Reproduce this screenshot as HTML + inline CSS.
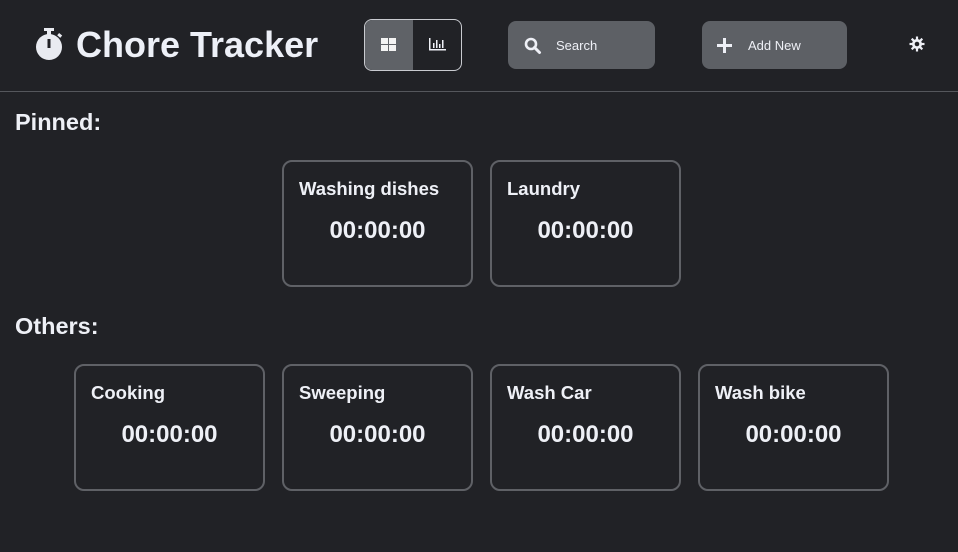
<!DOCTYPE html>
<html><head><style>
*{margin:0;padding:0;box-sizing:border-box}
body{width:958px;height:552px;background:#212226;font-family:"Liberation Sans",sans-serif;color:#eef0f6;position:relative;overflow:hidden}
.hdr{position:absolute;left:0;top:0;width:958px;height:92px;border-bottom:1px solid #55575c}
.title{position:absolute;left:76px;top:24px;font-size:36px;font-weight:bold;color:#edf0f7}
.tog{position:absolute;left:364px;top:19px;width:98px;height:52px;border:1px solid #c9cbd0;border-radius:8px;overflow:hidden}
.tog .a{position:absolute;left:0;top:0;width:48px;height:50px;background:#5f6267;border-radius:7px 0 0 7px}
.btn{position:absolute;top:21px;height:48px;background:#5d6065;border-radius:8px;font-size:13px;color:#eef0f6}
.btn span{position:absolute;top:17px}
.lbl{position:absolute;left:15px;font-size:23.5px;font-weight:bold}
.card{position:absolute;width:191px;height:127px;border:2px solid #5f6166;border-radius:10px}
.card .n{position:absolute;left:15px;top:16px;font-size:18.5px;font-weight:bold}
.card .t{position:absolute;left:0;right:0;top:55px;text-align:center;font-size:24px;font-weight:bold}
</style></head><body>
<div class="hdr">
<svg style="position:absolute;left:34px;top:27px" width="30" height="34" viewBox="0 0 30 34"><rect x="10" y="1" width="10" height="3" fill="#e9ebf1"/><rect x="13" y="3" width="4" height="5" fill="#e9ebf1"/><circle cx="15" cy="20" r="13" fill="#e9ebf1"/><rect x="13.5" y="12" width="3" height="9" fill="#212226"/><rect x="24" y="7" width="4" height="3" transform="rotate(40 26 8)" fill="#e9ebf1"/></svg>
<div class="title">Chore Tracker</div>
<div class="tog"><div class="a"></div>
<svg style="position:absolute;left:16px;top:18px" width="16" height="14"><rect x="0" y="0" width="7" height="6" fill="#f3f3f3"/><rect x="8" y="0" width="7" height="6" fill="#f3f3f3"/><rect x="0" y="7" width="7" height="6" fill="#f3f3f3"/><rect x="8" y="7" width="7" height="6" fill="#f3f3f3"/></svg>
<svg style="position:absolute;left:64px;top:17px" width="18" height="14" fill="#eef0f6"><rect x="0" y="1" width="1.5" height="12"/><rect x="0" y="12" width="17" height="1.5"/><rect x="4" y="6" width="1.5" height="5"/><rect x="7" y="3" width="1.5" height="8"/><rect x="10" y="7" width="1.5" height="4"/><rect x="13" y="3" width="1.5" height="8"/></svg>
</div>
<div class="btn" style="left:508px;width:147px">
<svg style="position:absolute;left:16px;top:16px" width="18" height="18"><circle cx="7" cy="7" r="5" stroke="#eef0f6" stroke-width="2.6" fill="none"/><line x1="10.5" y1="10.5" x2="15.5" y2="15.5" stroke="#eef0f6" stroke-width="3" stroke-linecap="round"/></svg>
<span style="left:48px">Search</span></div>
<div class="btn" style="left:702px;width:145px">
<svg style="position:absolute;left:15px;top:17px" width="15" height="15"><rect x="6" y="0" width="3" height="15" fill="#eef0f6"/><rect x="0" y="6" width="15" height="3" fill="#eef0f6"/></svg>
<span style="left:46px">Add New</span></div>
<svg style="position:absolute;left:909px;top:36px" width="16" height="16" viewBox="0 0 16 16"><g stroke="#eef0f6" stroke-width="2.2"><line x1="8" y1="0.5" x2="8" y2="15.5"/><line x1="0.5" y1="8" x2="15.5" y2="8"/><line x1="2.7" y1="2.7" x2="13.3" y2="13.3"/><line x1="13.3" y1="2.7" x2="2.7" y2="13.3"/></g><circle cx="8" cy="8" r="5" fill="#eef0f6"/><circle cx="8" cy="8" r="2.3" fill="#212226"/></svg>
</div>
<div class="lbl" style="top:109px">Pinned:</div>
<div class="card" style="left:282px;top:160px"><div class="n">Washing dishes</div><div class="t">00:00:00</div></div>
<div class="card" style="left:490px;top:160px"><div class="n">Laundry</div><div class="t">00:00:00</div></div>
<div class="lbl" style="top:313px">Others:</div>
<div class="card" style="left:74px;top:364px"><div class="n">Cooking</div><div class="t">00:00:00</div></div>
<div class="card" style="left:282px;top:364px"><div class="n">Sweeping</div><div class="t">00:00:00</div></div>
<div class="card" style="left:490px;top:364px"><div class="n">Wash Car</div><div class="t">00:00:00</div></div>
<div class="card" style="left:698px;top:364px"><div class="n">Wash bike</div><div class="t">00:00:00</div></div>
</body></html>
